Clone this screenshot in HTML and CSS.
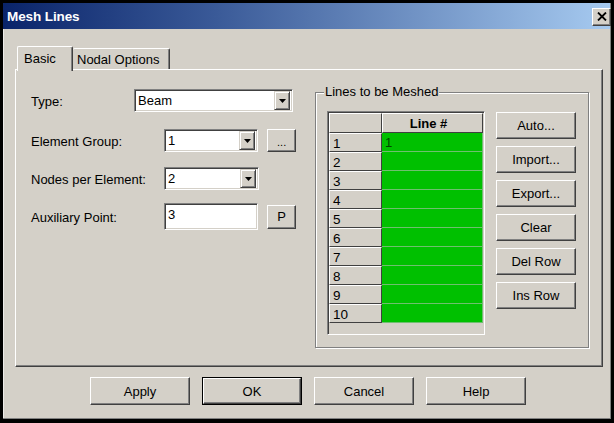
FILE: index.html
```html
<!DOCTYPE html>
<html>
<head>
<meta charset="utf-8">
<title>Mesh Lines</title>
<link rel="stylesheet" href="styles.css">
</head>
<body>
<div class="window">
  <div class="titlebar">
    <span class="title">Mesh Lines</span>
    <span class="close"><svg width="10" height="9" viewBox="0 0 10 9"><path d="M1 0.5 L9 8.5 M9 0.5 L1 8.5" stroke="#000" stroke-width="1.8" fill="none"/></svg></span>
  </div>
  <div class="client">
    <div class="tabs">
      <div class="tab active">Basic</div>
      <div class="tab">Nodal Options</div>
    </div>
    <div class="panel">
      <div class="form">
        <div class="row r-type">
          <span class="lbl short">Type:</span>
          <div class="combo wide"><span class="val">Beam</span><span class="drop"><svg width="7" height="4" viewBox="0 0 7 4"><path d="M0 0 H7 L3.5 4 Z" fill="#000"/></svg></span></div>
        </div>
        <div class="row r-group">
          <span class="lbl">Element Group:</span>
          <div class="combo"><span class="val">1</span><span class="drop"><svg width="7" height="4" viewBox="0 0 7 4"><path d="M0 0 H7 L3.5 4 Z" fill="#000"/></svg></span></div>
          <div class="btn small dots">...</div>
        </div>
        <div class="row r-nodes">
          <span class="lbl">Nodes per Element:</span>
          <div class="combo"><span class="val">2</span><span class="drop"><svg width="7" height="4" viewBox="0 0 7 4"><path d="M0 0 H7 L3.5 4 Z" fill="#000"/></svg></span></div>
        </div>
        <div class="row r-aux">
          <span class="lbl">Auxiliary Point:</span>
          <div class="edit"><span class="val">3</span></div>
          <div class="btn small pbtn">P</div>
        </div>
      </div>
      <div class="group">
        <span class="legend">Lines to be Meshed</span>
        <div class="grid">
          <div class="hcell corner"></div><div class="hcell colhead">Line #</div>
          <div class="rh">1</div><div class="cell">1</div>
          <div class="rh">2</div><div class="cell"></div>
          <div class="rh">3</div><div class="cell"></div>
          <div class="rh">4</div><div class="cell"></div>
          <div class="rh">5</div><div class="cell"></div>
          <div class="rh">6</div><div class="cell"></div>
          <div class="rh">7</div><div class="cell"></div>
          <div class="rh">8</div><div class="cell"></div>
          <div class="rh">9</div><div class="cell"></div>
          <div class="rh">10</div><div class="cell"></div>
        </div>
        <div class="side">
          <div class="btn side-btn">Auto...</div>
          <div class="btn side-btn">Import...</div>
          <div class="btn side-btn">Export...</div>
          <div class="btn side-btn">Clear</div>
          <div class="btn side-btn">Del Row</div>
          <div class="btn side-btn">Ins Row</div>
        </div>
      </div>
    </div>
    <div class="footer">
      <div class="btn foot">Apply</div>
      <div class="default"><div class="btn foot">OK</div></div>
      <div class="btn foot">Cancel</div>
      <div class="btn foot">Help</div>
    </div>
  </div>
</div>
</body>
</html>
```

FILE: styles.css
```css
* { box-sizing: border-box; }
html, body {
  margin: 0;
  padding: 0;
  background: #000;
  width: 614px;
  height: 423px;
  overflow: hidden;
  font-family: "Liberation Sans", Arial, sans-serif;
  font-size: 13px;
  color: #000;
}
.window {
  margin: 3px 0 0 3px;
  width: 608px;
  height: 416px;
  background: #d4d0c8;
  display: flex;
  flex-direction: column;
  border-right: 1px solid #808080;
  border-bottom: 1px solid #808080;
  box-shadow: inset 1px 0 0 #ecebe8;
}
.titlebar {
  height: 26px;
  flex: none;
  background: linear-gradient(to right, #0a246a 0%, #3a5a98 35%, #a6caf0 100%);
  display: flex;
  align-items: center;
  justify-content: space-between;
  padding-left: 4px;
}
.title {
  color: #fff;
  font-weight: bold;
  font-size: 13.5px;
  letter-spacing: -0.1px;
}
.close {
  width: 19px;
  height: 18px;
  margin-right: -1px;
  margin-top: 1px;
  background: #d4d0c8;
  border: 1px solid;
  border-color: #fff #404040 #404040 #fff;
  box-shadow: inset -1px -1px 0 #808080;
  display: flex;
  align-items: center;
  justify-content: center;
}
.client {
  flex: 1;
  display: flex;
  flex-direction: column;
  padding: 17px 7px 0 12px;
}
.tabs {
  height: 23px;
  display: flex;
  align-items: flex-end;
  padding-left: 2px;
  position: relative;
  z-index: 1;
}
.tab {
  height: 21px;
  padding: 0 6px 0 5px;
  display: flex;
  align-items: center;
  background: #d4d0c8;
  border-top: 1px solid #fff;
  border-left: 1px solid #fff;
  border-right: 1px solid #404040;
  box-shadow: inset -1px 0 0 #808080;
  border-radius: 2px 2px 0 0;
}
.tab.active {
  height: 25px;
  margin-bottom: -2px;
  width: 56px;
  padding: 0 0 2px 6px;
}
.tab + .tab {
  border-left: none;
  padding-left: 4px;
  width: 97px;
}
.panel {
  height: 298px;
  border: 1px solid;
  border-color: #fff #404040 #404040 #fff;
  box-shadow: inset -1px -1px 0 #808080;
  display: flex;
  align-items: flex-start;
}
.form {
  width: 265px;
  margin: 19px 0 0 15px;
  display: flex;
  flex-direction: column;
}
.row {
  display: flex;
  align-items: center;
}
.r-group { margin-top: 17px; }
.r-nodes { margin-top: 15px; }
.r-aux { margin-top: 13px; }
.lbl {
  width: 133px;
  flex: none;
  padding-top: 2px;
}
.lbl.short { width: 103px; }
.combo, .edit {
  width: 95px;
  height: 23px;
  background: #fff;
  border: 1px solid;
  border-color: #808080 #fff #fff #808080;
  box-shadow: inset 1px 1px 0 #404040, inset -1px -1px 0 #d4d0c8;
  display: flex;
  align-items: center;
  padding: 2px 2px 2px 3px;
}
.combo.wide { width: 159px; }
.val { flex: 1; }
.drop {
  width: 16px;
  height: 19px;
  background: #d4d0c8;
  border: 1px solid;
  border-color: #d4d0c8 #404040 #404040 #d4d0c8;
  box-shadow: inset 1px 1px 0 #fff, inset -1px -1px 0 #808080;
  display: flex;
  align-items: center;
  justify-content: center;
  padding-top: 1px;
}
.edit {
  height: 27px;
  align-items: flex-start;
  padding-top: 3px;
}
.btn {
  background: #d4d0c8;
  border: 1px solid;
  border-color: #fff #404040 #404040 #fff;
  box-shadow: inset -1px -1px 0 #808080;
  display: flex;
  align-items: center;
  justify-content: center;
}
.small {
  width: 29px;
  height: 23px;
  margin-left: 9px;
}
.dots { font-size: 11px; padding-top: 3px; }
.pbtn { height: 24px; }
.group {
  position: relative;
  width: 274px;
  height: 256px;
  margin: 22px 0 0 19px;
  border: 1px solid #808080;
  box-shadow: inset 1px 1px 0 #fff, 1px 1px 0 #fff;
  display: flex;
  align-items: flex-start;
  padding: 18px 0 0 11px;
}
.legend {
  position: absolute;
  left: 8px;
  top: -9px;
  padding: 0 1px 0 1px;
  background: #d4d0c8;
  line-height: 16px;
}
.grid {
  width: 158px;
  height: 224px;
  border: 1px solid;
  border-color: #808080 #fff #fff #808080;
  box-shadow: inset 1px 1px 0 #404040, inset -1px -1px 0 #d4d0c8;
  padding: 1px;
  display: grid;
  grid-template-columns: 53px 101px;
  grid-template-rows: 20px repeat(10, 19px);
  align-content: start;
  background: #d4d0c8;
}
.hcell, .rh {
  background: #d4d0c8;
  border: 1px solid;
  border-color: #fff #404040 #404040 #fff;
  display: flex;
  align-items: center;
}
.colhead {
  justify-content: center;
  font-weight: bold;
  padding-right: 8px;
}
.rh {
  padding: 1px 0 0 3px;
  font-size: 13.5px;
}
.cell {
  background: #00c000;
  border-right: 1px solid #6fbf6f;
  border-bottom: 1px solid #6fbf6f;
  padding: 1px 0 0 3px;
  color: #004400;
  display: flex;
  align-items: center;
}
.side {
  margin: 1px 0 0 11px;
  display: flex;
  flex-direction: column;
  gap: 7px;
}
.side-btn {
  width: 80px;
  height: 27px;
}
.footer {
  margin-top: 10px;
  display: flex;
  justify-content: center;
  gap: 12px;
  padding-right: 2px;
}
.foot {
  width: 100px;
  height: 28px;
}
.default {
  border: 1px solid #000;
  display: flex;
}
.default .foot {
  width: 98px;
  height: 26px;
}
```
